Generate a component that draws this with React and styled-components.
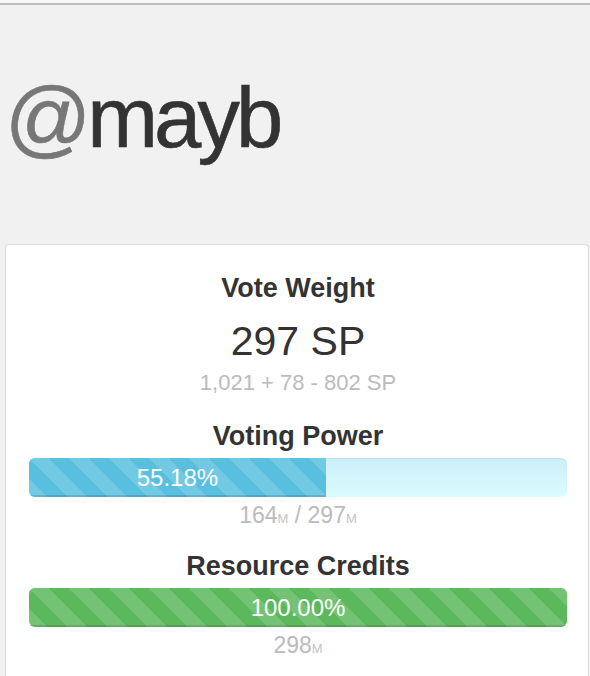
import React from "react";
import styled, { createGlobalStyle, css } from "styled-components";

const GlobalStyle = createGlobalStyle`
  html, body {
    margin: 0;
    padding: 0;
    background: #f1f1f1;
    font-family: "Liberation Sans", Arial, Helvetica, sans-serif;
    color: #333;
  }
`;

const TopRule = styled.div`
  height: 3px;
  background: #f7f7f7;
  border-bottom: 2px solid #bcbcbc;
`;

const Page = styled.div`
  padding: 0 1px 0 5px;
`;

const Username = styled.h1`
  margin: 70px 0 0 0;
  font-size: 85px;
  line-height: 85px;
  font-weight: 400;
  letter-spacing: -4px;
  color: #333;
  -webkit-text-stroke: 0.6px #333;
  & span {
    color: #777;
    -webkit-text-stroke: 0.6px #777;
  }
`;

const Panel = styled.section`
  margin-top: 84px;
  background: #fff;
  border: 1px solid #dcdcdc;
  border-bottom: none;
  border-radius: 4px 4px 0 0;
  padding: 28px 21px 40px 23px;
  display: flex;
  flex-direction: column;
  align-items: stretch;
  text-align: center;
`;

const Title = styled.h3`
  margin: ${(p) => p.$top || 0}px 0 0 0;
  font-size: 27px;
  line-height: 30px;
  font-weight: 700;
  color: #333;
`;

const BigValue = styled.div`
  margin-top: 16px;
  font-size: 41px;
  line-height: 44px;
  color: #333;
`;

const Muted = styled.div`
  font-size: ${(p) => p.$size || 22}px;
  line-height: 24px;
  color: #bbb;
  margin-top: ${(p) => p.$top || 0}px;
  & small {
    font-size: 13px;
    color: #c4c4c4;
  }
`;

const stripes = css`
  background-image: linear-gradient(
    45deg,
    rgba(255, 255, 255, 0.15) 25%,
    transparent 25%,
    transparent 50%,
    rgba(255, 255, 255, 0.15) 50%,
    rgba(255, 255, 255, 0.15) 75%,
    transparent 75%,
    transparent
  );
  background-size: 40px 40px;
`;

const Track = styled.div`
  margin-top: 7px;
  height: 39px;
  border-radius: 6px;
  overflow: hidden;
  display: flex;
  background: linear-gradient(to bottom, #cbeff8, #dbfcff);
  box-shadow: inset 0 1px 2px rgba(0, 0, 0, 0.06);
`;

const Fill = styled.div`
  height: 100%;
  display: flex;
  align-items: center;
  justify-content: center;
  font-size: 24px;
  color: #fff;
  background-color: ${(p) => p.$color};
  ${stripes};
  box-shadow: inset 0 -2px 0 rgba(0, 0, 0, 0.12);
`;

const Stat = ({ title, top, pct, color, children }) => (
  <>
    <Title $top={top}>{title}</Title>
    <Track>
      <Fill $color={color} style={{ width: `${pct}%` }}>
        {pct.toFixed(2)}%
      </Fill>
    </Track>
    <Muted $size={23} $top={6}>
      {children}
    </Muted>
  </>
);

export default function App() {
  return (
    <>
      <GlobalStyle />
      <TopRule />
      <Page>
        <Username>
          <span>@</span>mayb
        </Username>
        <Panel>
          <Title>Vote Weight</Title>
          <BigValue>297 SP</BigValue>
          <Muted $top={8}>1,021 + 78 - 802 SP</Muted>
          <Stat title="Voting Power" top={26} pct={55.18} color="#58bfdf">
            164<small>M</small> / 297<small>M</small>
          </Stat>
          <Stat title="Resource Credits" top={20} pct={100} color="#5cb85c">
            298<small>M</small>
          </Stat>
        </Panel>
      </Page>
    </>
  );
}
